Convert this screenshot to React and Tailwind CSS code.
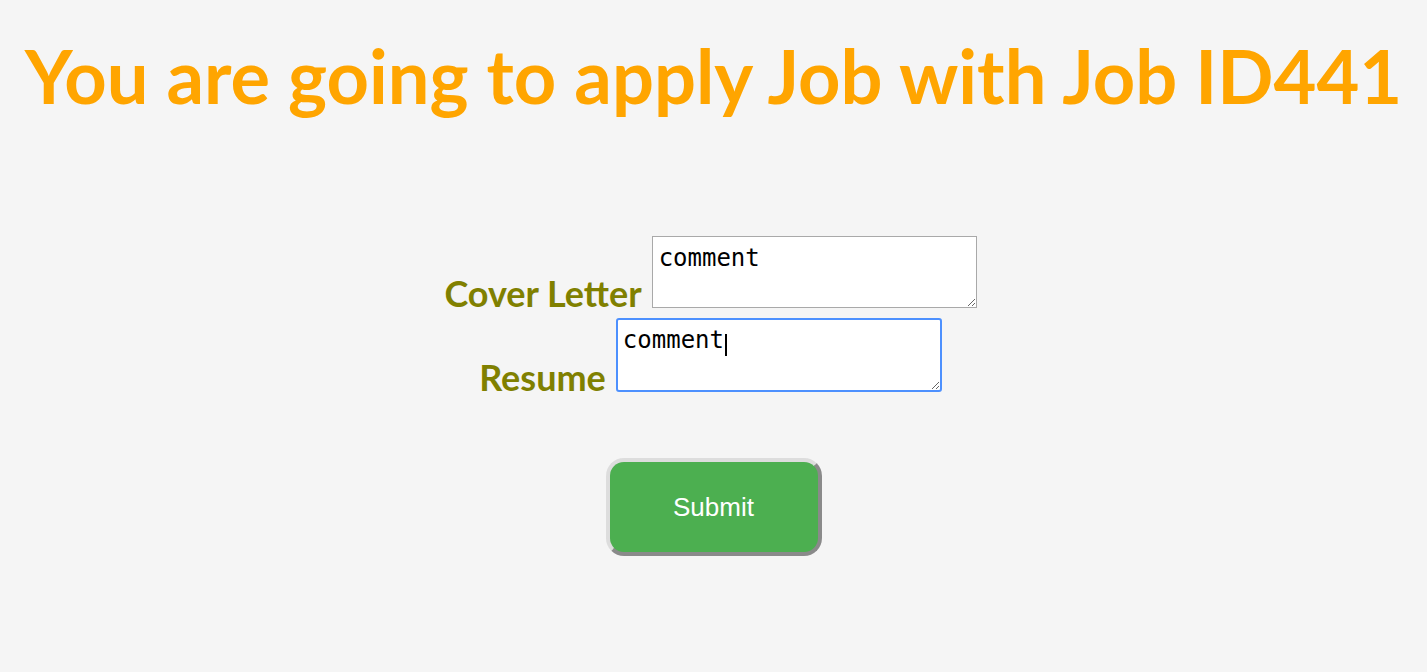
export default function App() {
  return (
    <div className="min-h-[672px] bg-[#f5f5f5] pt-[28px]">
      <h1 className="text-center text-[#ffa500] font-bold text-[74px] leading-[96px] font-['Lato',sans-serif]">
        You are going to apply Job with Job ID441
      </h1>
      <div className="mt-[112px] flex flex-col items-center gap-[10px]">
        <div className="flex items-end justify-center gap-[10px] ml-[-6px]">
          <label className="font-['Lato',sans-serif] font-bold text-[36px] text-[#808000] leading-none mb-[-3px]">Cover Letter</label>
          <textarea
            defaultValue="comment"
            className="w-[325px] h-[72px] bg-white border border-[#a9a9a9] px-[6px] pt-[8px] font-['DejaVu_Sans_Mono',monospace] text-[24px] leading-[26px] text-black outline-none resize-y"
          />
        </div>
        <div className="flex items-end justify-center gap-[10px] ml-[-6px]">
          <label className="font-['Lato',sans-serif] font-bold text-[36px] text-[#808000] leading-none mb-[-3px]">Resume</label>
          <div className="relative flex">
            <textarea
              defaultValue="comment"
              className="w-[326px] h-[74px] bg-white border-2 border-[#4d90fe] rounded-[3px] px-[5px] pt-[7px] font-['DejaVu_Sans_Mono',monospace] text-[24px] leading-[26px] text-black outline-none resize-y"
            />
            <span className="absolute left-[109px] top-[16px] w-[2px] h-[22px] bg-black pointer-events-none" />
          </div>
        </div>
        <button className="mt-[56px] w-[216px] h-[98px] bg-[#4caf50] text-white font-['Liberation_Sans',Arial,sans-serif] text-[26px] rounded-[18px] border-4 border-t-[#dddddd] border-l-[#dddddd] border-r-[#8a8a8a] border-b-[#8a8a8a]">
          Submit
        </button>
      </div>
    </div>
  );
}
